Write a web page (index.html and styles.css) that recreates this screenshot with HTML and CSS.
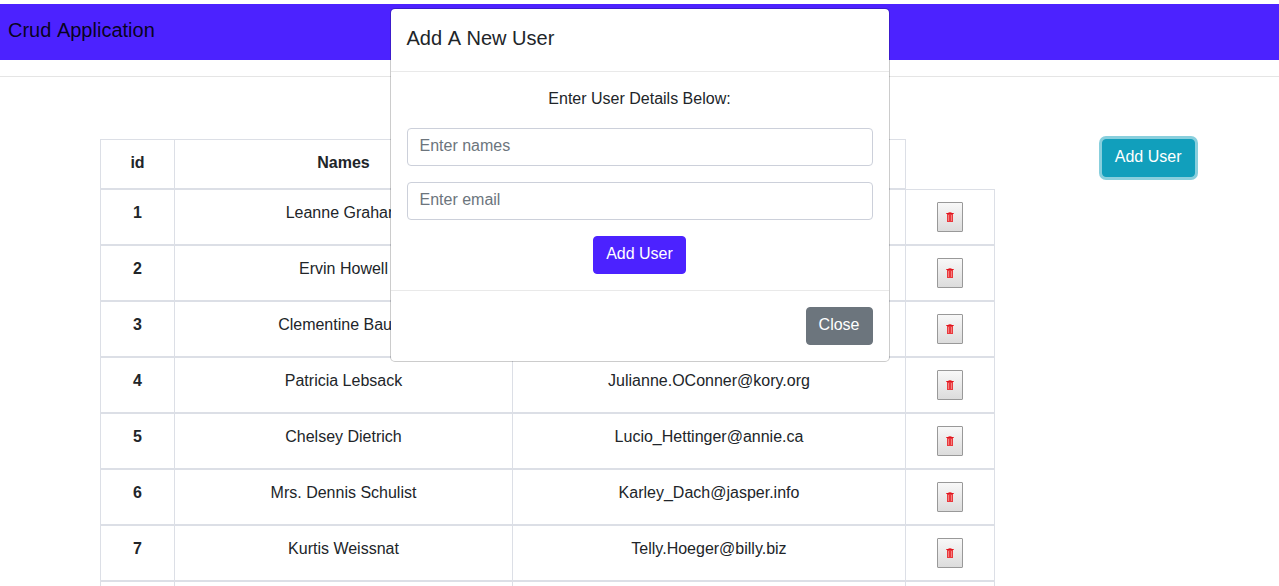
FILE: index.html
```
<!DOCTYPE html>
<html lang="en">
<head>
<meta charset="utf-8">
<title>Crud Application</title>
<link rel="stylesheet" href="styles.css">
</head>
<body>
<svg class="sprite" aria-hidden="true">
  <symbol id="trash" viewBox="0 0 8 10">
    <path d="M2.5 0h3v1h-3z" fill="#f06060"/>
    <path d="M0 1h8v1H0z" fill="#ee5050"/>
    <path d="M1 1h6v1H1z" fill="#dc1420"/>
    <path d="M1 2h6v8H1z" fill="#e93a3e"/>
    <path d="M2 3h1v6H2zM5 3h1v6H5z" fill="#f58080"/>
  </symbol>
</svg>
<header class="navbar"><a class="brand" href="#">Crud Application</a></header>
<hr class="divider">
<main class="content">
  <table class="users">
    <colgroup><col class="col-id"><col class="col-name"><col class="col-email"><col class="col-action"></colgroup>
    <thead>
      <tr><th scope="col">id</th><th scope="col">Names</th><th scope="col">Email</th><td class="blank"></td></tr>
    </thead>
    <tbody>
      <tr><th scope="row">1</th><td>Leanne Graham</td><td>Sincere@april.biz</td><td class="action"><button class="delete" type="button" aria-label="Delete"><svg class="icon"><use href="#trash"/></svg></button></td></tr>
      <tr><th scope="row">2</th><td>Ervin Howell</td><td>Shanna@melissa.tv</td><td class="action"><button class="delete" type="button" aria-label="Delete"><svg class="icon"><use href="#trash"/></svg></button></td></tr>
      <tr><th scope="row">3</th><td>Clementine Bauch</td><td>Nathan@yesenia.net</td><td class="action"><button class="delete" type="button" aria-label="Delete"><svg class="icon"><use href="#trash"/></svg></button></td></tr>
      <tr><th scope="row">4</th><td>Patricia Lebsack</td><td>Julianne.OConner@kory.org</td><td class="action"><button class="delete" type="button" aria-label="Delete"><svg class="icon"><use href="#trash"/></svg></button></td></tr>
      <tr><th scope="row">5</th><td>Chelsey Dietrich</td><td>Lucio_Hettinger@annie.ca</td><td class="action"><button class="delete" type="button" aria-label="Delete"><svg class="icon"><use href="#trash"/></svg></button></td></tr>
      <tr><th scope="row">6</th><td>Mrs. Dennis Schulist</td><td>Karley_Dach@jasper.info</td><td class="action"><button class="delete" type="button" aria-label="Delete"><svg class="icon"><use href="#trash"/></svg></button></td></tr>
      <tr><th scope="row">7</th><td>Kurtis Weissnat</td><td>Telly.Hoeger@billy.biz</td><td class="action"><button class="delete" type="button" aria-label="Delete"><svg class="icon"><use href="#trash"/></svg></button></td></tr>
      <tr class="next"><td></td><td></td><td></td><td class="action"></td></tr>
    </tbody>
  </table>
  <div class="side"><button class="btn btn-info" type="button">Add User</button></div>
</main>
<section class="modal" role="dialog" aria-labelledby="modal-title">
  <header class="modal-header"><h5 class="modal-title" id="modal-title">Add A New User</h5></header>
  <form class="modal-body">
    <p class="lead">Enter User Details Below:</p>
    <input class="field" type="text" placeholder="Enter names" aria-label="Names">
    <input class="field" type="email" placeholder="Enter email" aria-label="Email">
    <button class="btn btn-primary" type="button">Add User</button>
  </form>
  <footer class="modal-footer"><button class="btn btn-secondary" type="button">Close</button></footer>
</section>
</body>
</html>
```
FILE: styles.css
```
* { box-sizing: border-box; }
html { height: 100%; overflow: hidden; }
body {
  height: 100%;
  margin: 0;
  padding-top: 4px;
  overflow: hidden;
  background: #fff;
  color: #212529;
  font: 16px/24px "Liberation Sans", Arial, sans-serif;
}
.sprite { position: absolute; width: 0; height: 0; }
.navbar { padding: 11px 8px 15px; background: #4c22ff; }
.brand {
  display: block;
  color: rgba(0, 0, 0, .9);
  font-size: 20px;
  font-kerning: none;
  line-height: 30px;
  text-decoration: none;
}
.divider { margin: 16px 0 62px; border: 0; border-top: 1px solid #e5e5e5; }
.content { display: flex; align-items: flex-start; padding-left: 100px; }
.users {
  flex: none;
  width: 70vw;
  table-layout: fixed;
  border-collapse: separate;
  border-spacing: 0;
  text-align: center;
}
.col-id { width: 74px; }
.col-name { width: 338px; }
.col-email { width: 393px; }
.users th, .users td {
  padding: 11px 12px 13px;
  border: 1px solid #dcdfe6;
  border-right: 0;
  vertical-align: top;
}
.users .blank { border-width: 0 0 0 1px; }
.users .action { padding: 12px; border-right: 1px solid #dcdfe6; line-height: 0; }
.users .next td { height: 56px; }
.delete {
  width: 26px;
  height: 30px;
  padding: 0;
  border: 1px solid #999;
  border-radius: 1px;
  background: linear-gradient(#f8f8f8, #dcdcdc);
}
.icon { width: 8px; height: 10px; }
.side { flex: 1; padding-left: 22px; text-align: center; }
.btn {
  padding: 5px 12px 7px;
  border: 1px solid transparent;
  border-radius: 4px;
  color: #fff;
  font: inherit;
}
.btn-info { background: #119fbc; border-color: #119fbc; box-shadow: 0 0 0 3px #88cfdd; }
.btn-primary { background: #4c22ff; border-color: #4c22ff; }
.btn-secondary { background: #6c757d; border-color: #6c757d; }
.modal {
  position: absolute;
  top: 8px;
  right: 0;
  left: 0;
  width: 100%;
  max-width: 500px;
  margin: 0 auto;
  border: 1px solid rgba(0, 0, 0, .2);
  border-radius: 5px;
  background: #fff;
  background-clip: padding-box;
}
.modal-header { padding: 14px 16px 18px; border-bottom: 1px solid #e9e9e9; }
.modal-title { margin: 0; font-size: 20px; font-weight: 400; font-kerning: none; line-height: 30px; }
.modal-body { padding: 15px 16px 16px; text-align: center; }
.lead { margin: 0 0 17px; }
.field {
  display: block;
  width: 100%;
  height: 38px;
  margin: 0 0 16px;
  padding: 5px 12px 7px;
  border: 1px solid #ccd0da;
  border-radius: 4px;
  color: #495057;
  font: inherit;
}
.field::placeholder { color: #6c757d; opacity: 1; }
.modal-body .btn { display: block; margin: 0 auto; }
.modal-footer { display: flex; justify-content: flex-end; padding: 16px; border-top: 1px solid #e9e9e9; }
```
